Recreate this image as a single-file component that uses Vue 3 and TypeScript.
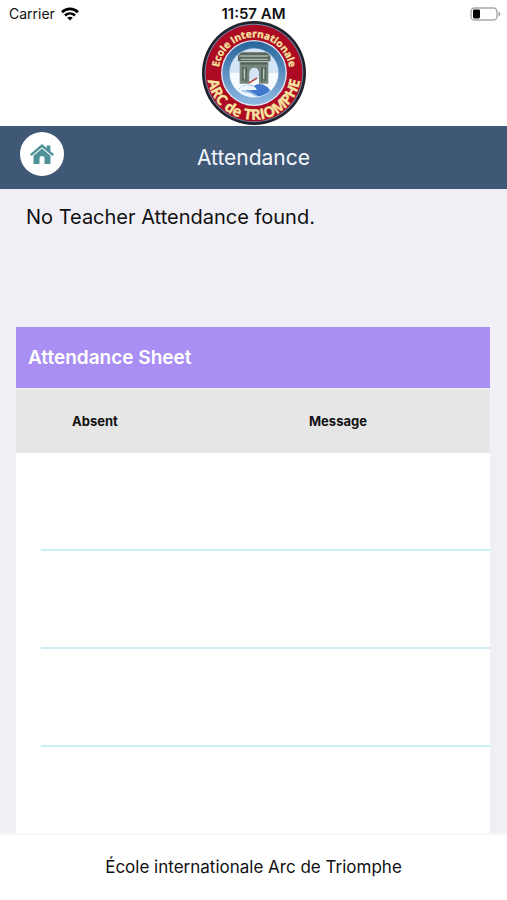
<script setup lang="ts">
import { ref } from 'vue'

interface AttendanceRow {
  id: number
  absent: string
  message: string
}

const school = 'École internationale Arc de Triomphe'
const rows = ref<AttendanceRow[]>(
  [1, 2, 3, 4].map((id) => ({ id, absent: '', message: '' })),
)
</script>

<template>
  <div class="page">
    <header class="top">
      <div class="status">
        <span class="carrier">
          Carrier
          <svg class="wifi" viewBox="0 0 18 14" aria-hidden="true">
            <g fill="none" stroke="#000" stroke-width="2.6">
              <path d="M1 5.2C5.6 .7 12.4 .7 17 5.2" />
              <path d="M4 8.5C6.9 5.8 11.1 5.8 14 8.5" />
            </g>
            <path d="M6.2 10.7C7.8 9.4 10.2 9.4 11.8 10.7L9 13.5Z" />
          </svg>
        </span>
        <span class="time">11:57 AM</span>
        <svg class="battery" viewBox="0 0 31 14" aria-hidden="true">
          <rect x="1" y="1" width="26" height="12" rx="3.6" fill="#fff" stroke="#a9a9a9" stroke-width="1.4" />
          <rect x="3" y="2.6" width="7" height="8.8" rx="1.4" />
          <path d="M28.5 4.5C31 5.5 31 8.5 28.5 9.5Z" fill="#a9a9a9" />
        </svg>
      </div>
      <svg class="logo" viewBox="-156 -156 312 312" role="img" aria-label="School crest">
        <defs>
          <path id="arc-top" d="M-107 0A107 107 0 0 1 107 0" />
          <path id="arc-bottom" d="M-122 -68A140 140 0 1 0 122 -68" />
          <clipPath id="inner"><circle r="72" /></clipPath>
          <linearGradient id="sky" x1="0" y1="0" x2="0" y2="1">
            <stop offset="0" stop-color="#27659a" />
            <stop offset="1" stop-color="#8fb9e4" />
          </linearGradient>
        </defs>
        <circle r="156" fill="#20222b" />
        <circle r="148" fill="#6f83a5" />
        <circle r="145" fill="#ad0b24" />
        <circle r="99" fill="#dfe7f3" />
        <circle r="95" fill="url(#sky)" />
        <circle r="74" fill="#c6dcf2" />
        <g clip-path="url(#inner)">
          <rect x="-74" y="-74" width="148" height="148" fill="#d4e5f5" />
          <path d="M-74 2Q-50 -7-30 8L0 25L35 6Q55-5 74 2V74H-74Z" fill="#f5faff" />
          <path d="M-46 -62H43L49 -50V-35H-48V-51Z" fill="#59675f" />
          <path d="M-44 -51H43M-40 -41H42" stroke="#aab6ab" stroke-width="4" />
          <path d="M-43 -34H43V32H15V-1A14 14 0 0 0 -14 -1V32H-43Z" fill="#78877c" />
          <path d="M-40 -28H40M-33 -18V23M-23 -18V27M24 -18V27M34 -18V23" stroke="#4f6058" stroke-width="5" />
          <path d="M-29 -12V17M29 -12V17" stroke="#bfc9bd" stroke-width="4" />
          <path d="M-15 30L9 15" stroke="#b94c50" stroke-width="5" />
          <path d="M-46 48Q-26 28 0 39Q18 26 41 43L52 56Q20 76 1 67Z" fill="#4278cc" />
          <path d="M-46 48Q-26 28 2 41L9 50Q-12 54-27 50L0 69Q-30 69-46 48Z" fill="#eef5ff" />
          <path d="M-38 53L-10 59L12 72" fill="none" stroke="#a7c8ec" stroke-width="5" />
        </g>
        <text class="crest-top">
          <textPath href="#arc-top" startOffset="50%" text-anchor="middle">Ecole Internationale</textPath>
        </text>
        <text class="crest-bottom">
          <textPath href="#arc-bottom" startOffset="50%" text-anchor="middle">ARC de TRIOMPHE</textPath>
        </text>
      </svg>
    </header>

    <nav class="bar">
      <button class="home" type="button" aria-label="Home">
        <svg viewBox="0 0 24 20" aria-hidden="true">
          <path d="M12 0L24 10.2L22.5 12L12 3.2L1.5 12L0 10.2Z" />
          <path d="M16.8 1.6H20.4V8L16.8 5Z" />
          <path d="M12 4.6L20.5 11.7V20H14.5V14.6A2.5 2.5 0 0 0 9.5 14.6V20H3.5V11.7Z" />
        </svg>
      </button>
      <h1>Attendance</h1>
    </nav>

    <main class="content">
      <p class="notice">No Teacher Attendance found.</p>
      <section class="sheet">
        <h2>Attendance Sheet</h2>
        <table>
          <thead>
            <tr>
              <th scope="col">Absent</th>
              <th scope="col">Message</th>
            </tr>
          </thead>
          <tbody>
            <tr v-for="row in rows" :key="row.id">
              <td>{{ row.absent }}</td>
              <td>{{ row.message }}</td>
            </tr>
          </tbody>
        </table>
      </section>
    </main>

    <footer class="footer">{{ school }}</footer>
  </div>
</template>

<style>
body {
  margin: 0;
}
</style>

<style scoped>
.page {
  display: flex;
  flex-direction: column;
  min-height: 100vh;
  background: #f0eff5;
  color: #111;
  font-family: Inter, "Liberation Sans", sans-serif;
}

.top {
  display: flex;
  flex-direction: column;
  align-items: center;
  padding-bottom: 1px;
  background: #fff;
}

.status {
  display: grid;
  grid-template-columns: 1fr auto 1fr;
  align-items: center;
  align-self: stretch;
  height: 21px;
  padding: 6px 6px 0;
  box-sizing: border-box;
  font-size: 14px;
  line-height: 16px;
}

.carrier {
  display: flex;
  align-items: center;
  gap: 6px;
  padding-left: 3px;
}

.wifi {
  width: 18px;
  height: 14px;
}

.time {
  font-size: 15px;
  font-weight: 600;
}

.battery {
  justify-self: end;
  width: 31px;
  height: 14px;
}

.logo {
  display: block;
  width: 104px;
  height: 104px;
}

.crest-top,
.crest-bottom {
  font-family: "Open Sans", "Noto Sans", sans-serif;
  font-weight: 700;
  fill: #f6e3a0;
  stroke: #f6e3a0;
  stroke-width: 1px;
}

.crest-top {
  font-size: 30px;
}

.crest-bottom {
  font-size: 44px;
}

.bar {
  display: grid;
  grid-template-columns: 44px 1fr 44px;
  align-items: center;
  height: 63px;
  padding: 0 20px;
  background: #3f5876;
}

.home {
  display: flex;
  align-items: center;
  justify-content: center;
  align-self: start;
  width: 44px;
  height: 44px;
  margin-top: 6px;
  padding: 0;
  border: 0;
  border-radius: 50%;
  background: #fff;
}

.home svg {
  width: 24px;
  height: 20px;
  fill: #4f9198;
}

h1 {
  margin: 0;
  color: #f2f7fc;
  font-size: 21px;
  font-weight: 400;
  line-height: 30px;
  text-align: center;
}

.content {
  display: flex;
  flex: 1;
  flex-direction: column;
  padding: 14px 17px 0 16px;
}

.notice {
  margin: 0 10px 96px;
  font-size: 20px;
  line-height: 28px;
}

.sheet {
  flex: 1;
  background: #fff;
}

h2 {
  margin: 0;
  padding: 17px 12px 16px;
  border-bottom: 2px solid #ececf0;
  background: #a98ff3;
  color: #fff;
  font-size: 19px;
  font-weight: 600;
  line-height: 28px;
}

table {
  width: 100%;
  border-collapse: collapse;
  table-layout: fixed;
}

th {
  height: 61px;
  padding: 0 0 2px 56px;
  background: #e6e6e6;
  font-size: 13px;
  font-weight: 700;
  text-align: left;
}

td {
  height: 98px;
  padding: 0;
}

tbody tr:not(:last-child) {
  background: linear-gradient(#c8f0f3, #c8f0f3) right bottom / calc(100% - 25px) 2px no-repeat;
}

tbody tr:last-child td {
  height: 81px;
}

.footer {
  padding: 19px 16px 19px;
  border-top: 2px solid #f6f6f8;
  background: #fff;
  font-size: 17px;
  line-height: 27px;
  text-align: center;
}
</style>
